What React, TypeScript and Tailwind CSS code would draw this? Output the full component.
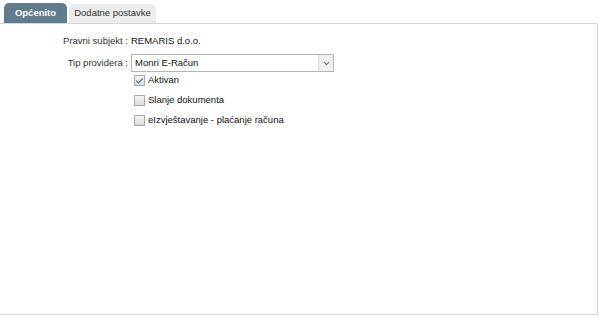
import { Check, ChevronDown } from 'lucide-react'

interface CheckItem {
  label: string
  checked: boolean
}

const checks: CheckItem[] = [
  { label: 'Aktivan', checked: true },
  { label: 'Slanje dokumenta', checked: false },
  { label: 'eIzvještavanje - plaćanje računa', checked: false },
]

export default function App() {
  return (
    <div className="w-[600px] h-[317px] bg-white text-[9.5px] text-[#111] [font-family:'Liberation_Sans',Arial,sans-serif]">
      <div className="flex items-end gap-[2px] pl-[4px] pt-[3px] h-[23px] whitespace-nowrap">
        <div className="h-[20px] w-[63px] rounded-t-[5px] bg-[#5f7b8d] text-white font-bold flex items-center justify-center">
          Općenito
        </div>
        <div className="h-[19px] w-[87px] rounded-t-[5px] bg-[#ececec] text-[#333] flex items-center justify-center">
          Dodatne postavke
        </div>
      </div>
      <div className="w-[598px] h-[292px] border-t border-r border-b border-[#d4d4d4] pt-[11px]">
        <div className="flex items-center h-[13px]">
          <span className="w-[130px] text-right pr-[2px] text-[#333]">Pravni subjekt :</span>
          <span className="pl-[1px]">REMARIS d.o.o.</span>
        </div>
        <div className="flex items-center mt-[6px] h-[18px]">
          <span className="w-[130px] text-right pr-[2px] text-[#333]">Tip providera :</span>
          <div className="ml-[1px] w-[203px] h-[18px] border border-[#b5b5b5] bg-white flex items-center">
            <span className="flex-1 pl-[3px]">Monri E-Račun</span>
            <div className="w-[15px] h-full border-l border-[#d8d8d8] bg-[#efefef] flex items-center justify-center">
              <ChevronDown size={9} strokeWidth={3} className="text-[#777]" />
            </div>
          </div>
        </div>
        <div className="flex flex-col gap-[7px] pl-[134px] mt-[2px]">
          {checks.map((item, index) => (
            <div key={index} className="flex items-center h-[13px] gap-[3px]">
              <div className="w-[11px] h-[11px] border border-[#a8a8a8] bg-gradient-to-b from-[#f4f4f4] to-[#dcdcdc] flex items-center justify-center">
                {item.checked && <Check size={10} strokeWidth={3} className="text-[#4a6fa5]" />}
              </div>
              <span>{item.label}</span>
            </div>
          ))}
        </div>
      </div>
    </div>
  )
}
